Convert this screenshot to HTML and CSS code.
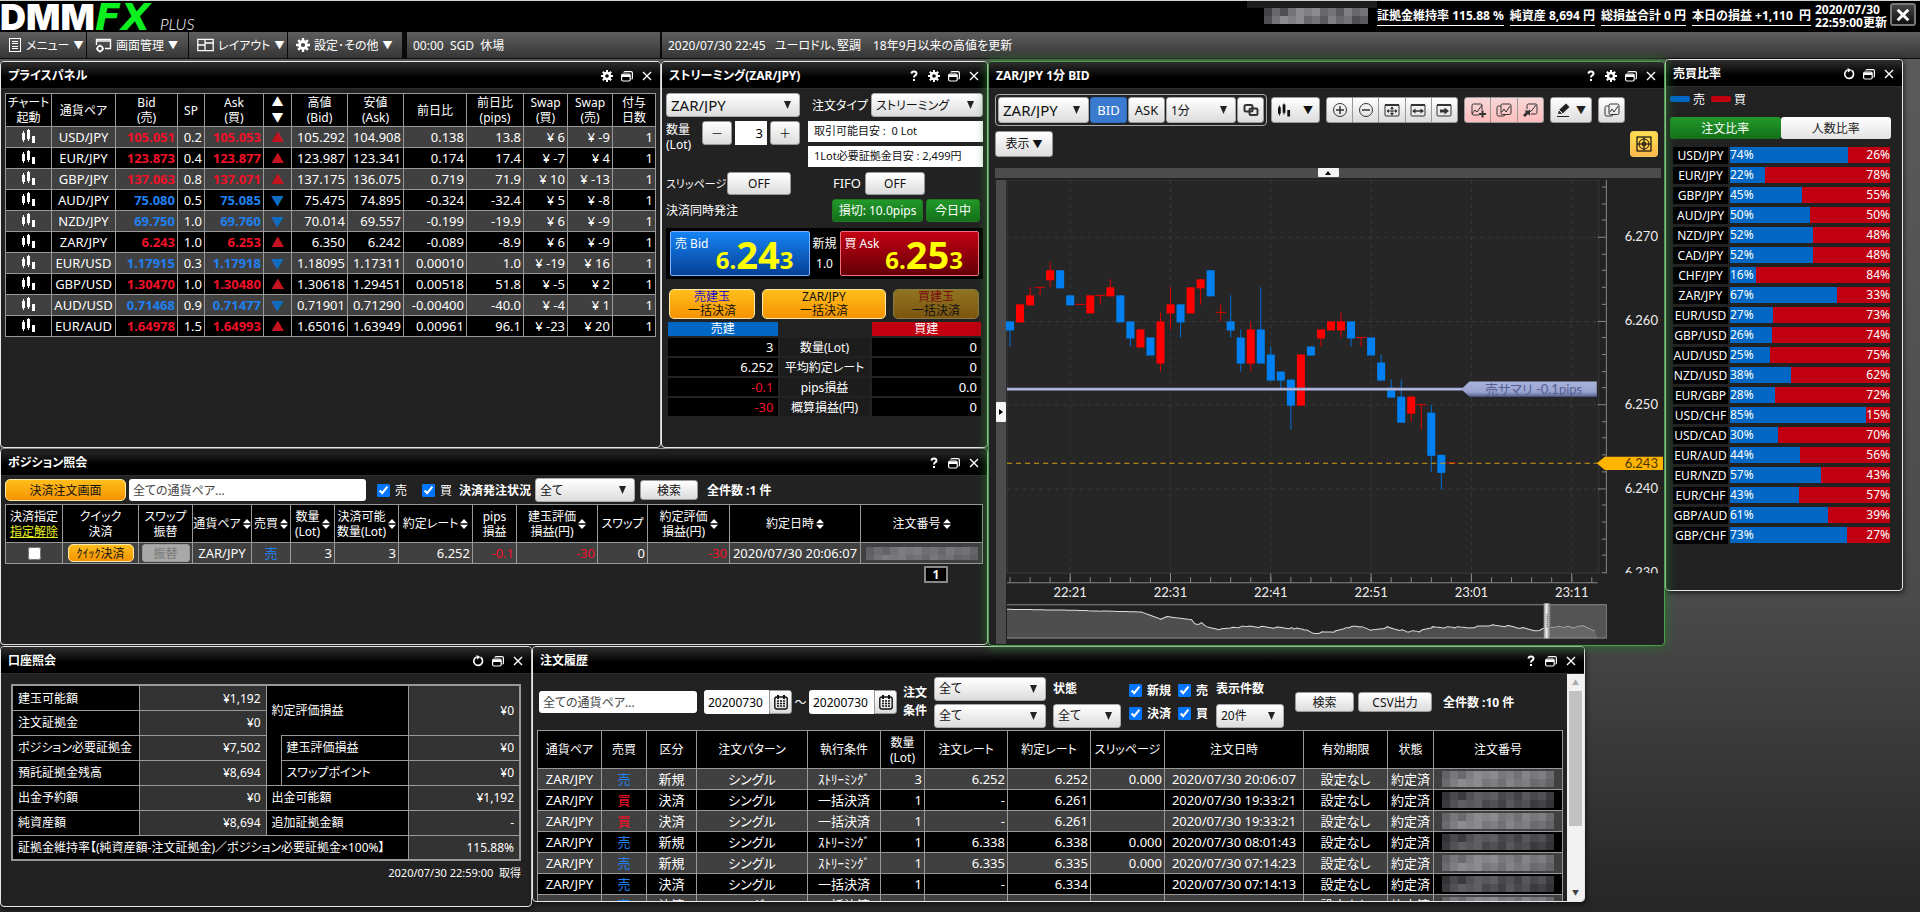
FILE: index.html
```html
<!DOCTYPE html>
<html lang="ja">
<head>
    <meta charset="UTF-8">
    <meta name="viewport" content="width=device-width, initial-scale=1.0">
    <title>DMM FX PLUS</title>
    <link rel="stylesheet" href="styles.css">
</head>
<body>
    <!-- Icon set -->
    <svg class="icon-defs" width="0" height="0" aria-hidden="true">
        <symbol id="i-help" viewBox="0 0 12 12"><path d="M3.5 3.6Q3.6 1.4 6 1.4T8.5 3.5Q8.5 4.8 7.2 5.4Q6 6 6 7.6" fill="none" stroke="currentColor" stroke-width="2"/><rect x="5" y="9" width="2" height="2" fill="currentColor"/></symbol>
        <symbol id="i-gear" viewBox="0 0 12 12"><circle cx="6" cy="6" r="3" fill="none" stroke="currentColor" stroke-width="2.4"/><path d="M6 0v3M6 9v3M0 6h3M9 6h3M1.8 1.8l2 2M8.2 8.2l2 2M1.8 10.2l2-2M8.2 3.8l2-2" stroke="currentColor" stroke-width="2"/></symbol>
        <symbol id="i-window" viewBox="0 0 12 12"><rect x=".6" y="4" width="8.6" height="7" rx="1.5" fill="none" stroke="currentColor" stroke-width="1.2"/><path d="M1 4.5h8v2.6H1z" fill="currentColor"/><path d="M3 2.6Q3 1.6 4 1.6h6q1.4 0 1.4 1.4v5q0 1-1 1" fill="none" stroke="currentColor" stroke-width="1.2"/></symbol>
        <symbol id="i-close" viewBox="0 0 12 12"><path d="M2 2l8 8M10 2l-8 8" stroke="currentColor" stroke-width="1.4"/></symbol>
        <symbol id="i-close-bold" viewBox="0 0 12 12"><path d="M2 2l8 8M10 2l-8 8" stroke="currentColor" stroke-width="2.2"/></symbol>
        <symbol id="i-reload" viewBox="0 0 12 12"><path d="M8.5 2.3A4.4 4.4 0 1 1 4.6 1.9" fill="none" stroke="currentColor" stroke-width="1.6"/><path d="M4.5 0l4 2-3.6 2.4z" fill="currentColor"/></symbol>
        <symbol id="i-sort" viewBox="0 0 8 10"><path d="M4 0l4 4.2H0zM4 10l4-4.2H0z" fill="currentColor"/></symbol>
        <symbol id="i-candle" viewBox="0 0 14 15"><path d="M0 4h3v7H0zM5 1h3v9H5zM10 7h3v7h-3z" fill="currentColor"/><path d="M1.5 2v11M6.500 0v12" stroke="currentColor"/></symbol>
        <symbol id="i-calendar" viewBox="0 0 14 15"><rect x=".8" y="2" width="12.4" height="12" rx="2" fill="none" stroke="currentColor" stroke-width="1.4"/><path d="M4 0v4M10 0v4" stroke="currentColor" stroke-width="2"/><path d="M3 6h8M3 8.5h8M3 11h8" stroke="currentColor" stroke-width="1.6" stroke-dasharray="2 1"/></symbol>
        <symbol id="i-list" viewBox="0 0 14 14"><rect x="1.5" y=".5" width="11" height="13" fill="none" stroke="currentColor"/><path d="M4 3.5h6M4 5.5h6M4 8.5h6M4 10.5h6" stroke="currentColor"/></symbol>
        <symbol id="i-screen" viewBox="0 0 17 15"><path d="M1.5 7V1.5h14v9H10" fill="none" stroke="currentColor" stroke-width="1.4"/><path d="M1.5 3h14" stroke="currentColor" stroke-width="1.4"/><circle cx="5" cy="10.6" r="2.6" fill="none" stroke="currentColor" stroke-width="1.6"/><path d="M5 6.8v1.6M5 12.8v1.6M1.2 10.6h1.6M7.2 10.6h1.6" stroke="currentColor" stroke-width="1.6"/></symbol>
        <symbol id="i-layout" viewBox="0 0 17 14"><path d="M.8 1.3h15.4v11.4H.8zM8 1.3v11.4M.8 7H8M8 5h8" fill="none" stroke="currentColor" stroke-width="1.3"/></symbol>
        <symbol id="i-link" viewBox="0 0 16 14"><rect x="1.5" y="2" width="8" height="6.5" rx="1.5" fill="none" stroke="currentColor" stroke-width="2"/><rect x="6.5" y="5.5" width="8" height="6.5" rx="1.5" fill="none" stroke="currentColor" stroke-width="2"/></symbol>
        <symbol id="i-plus" viewBox="0 0 16 16"><circle cx="8" cy="8" r="6.5" fill="none" stroke="currentColor"/><path d="M4 8h8M8 4v8" stroke="currentColor" stroke-width="1.5"/></symbol>
        <symbol id="i-minus" viewBox="0 0 16 16"><circle cx="8" cy="8" r="6.5" fill="none" stroke="currentColor"/><path d="M4 8h8" stroke="currentColor" stroke-width="1.5"/></symbol>
        <symbol id="i-move" viewBox="0 0 16 16"><rect x="1" y="2.5" width="14" height="11.5" rx="1" fill="none" stroke="currentColor"/><path d="M1 2h14v2H1z" fill="currentColor"/><path d="M3 9h10M8 5v8" stroke="currentColor"/><path d="M2.5 9l2.5-2v4zM13.5 9L11 7v4zM8 4.5L6 7h4zM8 13.5L6 11h4z" fill="currentColor"/></symbol>
        <symbol id="i-wide" viewBox="0 0 16 16"><rect x="1" y="2.5" width="14" height="11.5" rx="1" fill="none" stroke="currentColor"/><path d="M1 2h14v2H1z" fill="currentColor"/><path d="M4 9h8" stroke="currentColor" stroke-width="1.4"/><path d="M2 9l3.5-2.5v5zM14 9l-3.5-2.5v5z" fill="currentColor"/></symbol>
        <symbol id="i-latest" viewBox="0 0 16 16"><rect x="1" y="2.5" width="14" height="11.5" rx="1" fill="none" stroke="currentColor"/><path d="M1 2h14v2H1z" fill="currentColor"/><path d="M4 7.500h4.500V5.500L13 9l-4.500 3.500v-2H4z" fill="currentColor"/></symbol>
        <symbol id="i-tech-add" viewBox="0 0 16 16"><path d="M9 13H3.5Q2 13 2 11.5V3.5Q2 2 3.5 2h7Q12 2 12 3.5V8" fill="none" stroke="currentColor"/><path d="M2 12l3-4 2 2 5-7" fill="none" stroke="currentColor"/><path d="M12.5 8.500v7M9 12h7" stroke="currentColor" stroke-width="2"/></symbol>
        <symbol id="i-tech-copy" viewBox="0 0 16 16"><path d="M5 4H2.5Q1 4 1 5.5v7Q1 14 2.5 14h5Q9 14 9 12.5" fill="none" stroke="currentColor"/><rect x="5" y="2" width="10" height="10.5" rx="1.5" fill="none" stroke="currentColor"/><path d="M6 10l2-3 2 3 4-6" fill="none" stroke="currentColor"/></symbol>
        <symbol id="i-tech-out" viewBox="0 0 16 16"><path d="M5 7V3.5Q5 2 6.5 2h7Q15 2 15 3.5v7Q15 12 13.5 12H9" fill="none" stroke="currentColor"/><path d="M7 8l2 1.500 5-6.500" fill="none" stroke="currentColor"/><path d="M2.500 8.500H8V14l-2-2-3 3-2-2 3-3z" fill="currentColor"/></symbol>
        <symbol id="i-pen" viewBox="0 0 16 16"><path d="M2 12l1-4 7-6.5 3.5 3.5-7 6.5z" fill="currentColor"/><path d="M3 8l3.5 3.5" stroke="#fff"/><path d="M1 14.5h12" stroke="currentColor"/></symbol>
        <symbol id="i-target" viewBox="0 0 16 16"><rect x="1" y="1" width="14" height="14" fill="none" stroke="currentColor" stroke-width="1.2"/><circle cx="8" cy="8" r="5" fill="none" stroke="currentColor"/><circle cx="8" cy="8" r="2" fill="none" stroke="currentColor"/><path d="M1 8h14M8 1v14" stroke="currentColor"/></symbol>
    </svg>

    <header class="top-bar">
        <div class="logo"><span class="logo-dmm">DMM</span><span class="logo-fx">FX</span><span class="logo-plus">PLUS</span></div>
        <div class="account-name"><svg class="mosaic" id="name-mosaic" width="104" height="16"></svg></div>
        <div class="summary">
            <span>証拠金維持率 115.88 %</span>
            <span>純資産 8,694 円</span>
            <span>総損益合計 0 円</span>
            <span>本日の損益 +1,110 &nbsp;円</span>
        </div>
        <div class="updated">2020/07/30<br>22:59:00更新</div>
        <button class="app-close" aria-label="閉じる"><svg width="16" height="16"><use href="#i-close-bold"/></svg></button>
    </header>

    <nav class="menu-bar">
        <button class="menu-item m-menu"><svg width="14" height="14"><use href="#i-list"/></svg>メニュー<i>▼</i></button>
        <button class="menu-item m-screen"><svg width="17" height="15"><use href="#i-screen"/></svg>画面管理<i>▼</i></button>
        <button class="menu-item m-layout"><svg width="17" height="14"><use href="#i-layout"/></svg>レイアウト<i>▼</i></button>
        <button class="menu-item m-setting"><svg width="14" height="14"><use href="#i-gear"/></svg>設定･その他<i>▼</i></button>
        <div class="ticker ticker-first">00:00 &nbsp;SGD &nbsp;休場</div>
        <div class="ticker ticker-news">2020/07/30 22:45 &nbsp; ユーロドル、堅調　18年9月以来の高値を更新</div>
    </nav>

    <main class="desktop">
        <div class="upper">
            <div class="left-side">
                <div class="left-top">
                    <section class="window price-panel">
                        <div class="title-bar">
                            <h2>プライスパネル</h2>
                            <button aria-label="設定"><svg><use href="#i-gear"/></svg></button>
                            <button aria-label="最大化"><svg><use href="#i-window"/></svg></button>
                            <button aria-label="閉じる"><svg><use href="#i-close"/></svg></button>
                        </div>
                        <table class="grid-table price-table">
                            <thead>
                                <tr>
                                    <th>チャート<br>起動</th>
                                    <th>通貨ペア</th>
                                    <th>Bid<br>(売)</th>
                                    <th>SP</th>
                                    <th>Ask<br>(買)</th>
                                    <th>▲<br>▼</th>
                                    <th>高値<br>(Bid)</th>
                                    <th>安値<br>(Ask)</th>
                                    <th>前日比</th>
                                    <th>前日比<br>(pips)</th>
                                    <th>Swap<br>(買)</th>
                                    <th>Swap<br>(売)</th>
                                    <th>付与<br>日数</th>
                                </tr>
                            </thead>
                            <tbody id="price-body"></tbody>
                        </table>
                    </section>

                    <section class="window streaming">
                        <div class="title-bar">
                            <h2>ストリーミング(ZAR/JPY)</h2>
                            <button aria-label="ヘルプ"><svg><use href="#i-help"/></svg></button>
                            <button aria-label="設定"><svg><use href="#i-gear"/></svg></button>
                            <button aria-label="最大化"><svg><use href="#i-window"/></svg></button>
                            <button aria-label="閉じる"><svg><use href="#i-close"/></svg></button>
                        </div>
                        <div class="order-form">
                            <div class="form-row">
                                <select class="select big pair-select" aria-label="通貨ペア"><option>ZAR/JPY</option></select>
                                <label class="type-label" for="order-type">注文タイプ</label>
                                <select class="select type-select" id="order-type"><option>ストリーミング</option></select>
                            </div>
                            <div class="form-row lot-row">
                                <label class="lot-label" for="lot">数量<br>(Lot)</label>
                                <button class="btn step">－</button>
                                <input class="lot-input" id="lot" type="text" value="3">
                                <button class="btn step">＋</button>
                                <div class="info-boxes">
                                    <div>取引可能目安 : &nbsp;0 Lot</div>
                                    <div>1Lot必要証拠金目安 : 2,499円</div>
                                </div>
                            </div>
                            <div class="form-row slip-row">
                                <span class="slip-label">スリッページ</span>
                                <button class="btn slip-btn">OFF</button>
                                <span class="fifo-label">FIFO</span>
                                <button class="btn fifo-btn">OFF</button>
                            </div>
                            <div class="form-row settle-row">
                                <span>決済同時発注</span>
                                <button class="btn green loss-btn">損切: 10.0pips</button>
                                <button class="btn green day-btn">今日中</button>
                            </div>
                        </div>
                        <div class="rates">
                            <button class="rate bid"><span>売 Bid</span><b>6.<em>24</em>3</b></button>
                            <div class="spread">新規<br>1.0</div>
                            <button class="rate ask"><span>買 Ask</span><b>6.<em>25</em>3</b></button>
                        </div>
                        <div class="close-all">
                            <button class="btn gold"><span class="sell">売建玉</span><br>一括決済</button>
                            <button class="btn gold mid">ZAR/JPY<br>一括決済</button>
                            <button class="btn gold" disabled><span class="buy">買建玉</span><br>一括決済</button>
                        </div>
                        <table class="summary-table">
                            <tr><th class="sell-head">売建</th><td class="blank"></td><th class="buy-head">買建</th></tr>
                            <tr><td>3</td><th>数量(Lot)</th><td>0</td></tr>
                            <tr><td>6.252</td><th>平均約定レート</th><td>0</td></tr>
                            <tr><td class="minus">-0.1</td><th>pips損益</th><td>0.0</td></tr>
                            <tr><td class="minus">-30</td><th>概算損益(円)</th><td>0</td></tr>
                        </table>
                    </section>
                </div>

                <section class="window position">
                    <div class="title-bar">
                        <h2>ポジション照会</h2>
                        <button aria-label="ヘルプ"><svg><use href="#i-help"/></svg></button>
                        <button aria-label="最大化"><svg><use href="#i-window"/></svg></button>
                        <button aria-label="閉じる"><svg><use href="#i-close"/></svg></button>
                    </div>
                    <div class="filter-row">
                        <button class="btn gold settle-btn">決済注文画面</button>
                        <input class="text-input pos-pair" type="text" placeholder="全ての通貨ペア..." aria-label="通貨ペア">
                        <label class="check"><input type="checkbox" checked>売</label>
                        <label class="check"><input type="checkbox" checked>買</label>
                        <label class="strong" for="pos-status">決済発注状況</label>
                        <select class="select pos-status" id="pos-status"><option>全て</option></select>
                        <button class="btn pos-search">検索</button>
                        <span class="strong">全件数 :1 件</span>
                    </div>
                    <table class="grid-table position-table">
                        <thead>
                            <tr>
                                <th>決済指定<br><a href="#">指定解除</a></th>
                                <th>クイック<br>決済</th>
                                <th>スワップ<br>振替</th>
                                <th><span class="sortable">通貨ペア<svg><use href="#i-sort"/></svg></span></th>
                                <th><span class="sortable">売買<svg><use href="#i-sort"/></svg></span></th>
                                <th><span class="sortable"><span>数量<br>(Lot)</span><svg><use href="#i-sort"/></svg></span></th>
                                <th><span class="sortable"><span>決済可能<br>数量(Lot)</span><svg><use href="#i-sort"/></svg></span></th>
                                <th><span class="sortable">約定レート<svg><use href="#i-sort"/></svg></span></th>
                                <th>pips<br>損益</th>
                                <th><span class="sortable"><span>建玉評価<br>損益(円)</span><svg><use href="#i-sort"/></svg></span></th>
                                <th>スワップ</th>
                                <th><span class="sortable"><span>約定評価<br>損益(円)</span><svg><use href="#i-sort"/></svg></span></th>
                                <th><span class="sortable">約定日時<svg><use href="#i-sort"/></svg></span></th>
                                <th><span class="sortable">注文番号<svg><use href="#i-sort"/></svg></span></th>
                            </tr>
                        </thead>
                        <tbody>
                            <tr>
                                <td class="center"><input type="checkbox" aria-label="決済指定"></td>
                                <td class="center"><button class="btn gold quick-btn">ｸｲｯｸ決済</button></td>
                                <td class="center"><button class="btn swap-btn" disabled>振替</button></td>
                                <td class="center">ZAR/JPY</td>
                                <td class="center down">売</td>
                                <td>3</td>
                                <td>3</td>
                                <td>6.252</td>
                                <td class="minus">-0.1</td>
                                <td class="minus">-30</td>
                                <td>0</td>
                                <td class="minus">-30</td>
                                <td class="center">2020/07/30 20:06:07</td>
                                <td class="center"><svg class="mosaic" id="pos-mosaic" width="112" height="13"></svg></td>
                            </tr>
                        </tbody>
                    </table>
                    <div class="pager"><button>1</button></div>
                </section>
            </div>

            <section class="window chart active">
                <div class="title-bar">
                    <h2>ZAR/JPY 1分 BID</h2>
                    <button aria-label="ヘルプ"><svg><use href="#i-help"/></svg></button>
                    <button aria-label="設定"><svg><use href="#i-gear"/></svg></button>
                    <button aria-label="最大化"><svg><use href="#i-window"/></svg></button>
                    <button aria-label="閉じる"><svg><use href="#i-close"/></svg></button>
                </div>
                <div class="chart-tools">
                    <div class="tool-box">
                        <select class="select big chart-pair" aria-label="通貨ペア"><option>ZAR/JPY</option></select>
                        <button class="btn side selected">BID</button>
                        <button class="btn side">ASK</button>
                        <select class="select chart-span" aria-label="足種"><option>1分</option></select>
                        <button class="btn icon-btn" aria-label="連動"><svg width="16" height="14"><use href="#i-link"/></svg></button>
                    </div>
                    <button class="btn candle-btn" aria-label="チャート種類"><svg width="14" height="15"><use href="#i-candle"/></svg><i>▼</i></button>
                    <div class="btn-group zoom">
                        <button class="btn icon-btn" aria-label="拡大"><svg><use href="#i-plus"/></svg></button>
                        <button class="btn icon-btn" aria-label="縮小"><svg><use href="#i-minus"/></svg></button>
                        <button class="btn icon-btn" aria-label="全体表示"><svg><use href="#i-move"/></svg></button>
                        <button class="btn icon-btn" aria-label="横幅"><svg><use href="#i-wide"/></svg></button>
                        <button class="btn icon-btn" aria-label="最新"><svg><use href="#i-latest"/></svg></button>
                    </div>
                    <div class="btn-group pink">
                        <button class="btn icon-btn" aria-label="テクニカル追加"><svg><use href="#i-tech-add"/></svg></button>
                        <button class="btn icon-btn" aria-label="テクニカルコピー"><svg><use href="#i-tech-copy"/></svg></button>
                        <button class="btn icon-btn" aria-label="テクニカル呼出"><svg><use href="#i-tech-out"/></svg></button>
                    </div>
                    <button class="btn pen-btn" aria-label="描画"><svg><use href="#i-pen"/></svg><i>▼</i></button>
                    <button class="btn icon-btn copy-btn" aria-label="複製"><svg><use href="#i-tech-copy"/></svg></button>
                </div>
                <div class="chart-tools second">
                    <button class="btn view-btn">表示<i>▼</i></button>
                    <button class="btn target-btn" aria-label="ターゲット"><svg><use href="#i-target"/></svg></button>
                </div>
                <div class="fold-top"><button aria-label="折りたたむ"><svg viewBox="0 0 6 4"><path d="M3 0l3 4H0z"/></svg></button></div>
                <div class="chart-area">
                    <div class="fold-left"><button aria-label="開く"><svg viewBox="0 0 4 6"><path d="M0 0l4 3-4 3z"/></svg></button></div>
                    <svg id="chart" viewBox="0 0 655 463"></svg>
                </div>
            </section>

            <section class="window ratio">
                <div class="title-bar">
                    <h2>売買比率</h2>
                    <button aria-label="更新"><svg><use href="#i-reload"/></svg></button>
                    <button aria-label="最大化"><svg><use href="#i-window"/></svg></button>
                    <button aria-label="閉じる"><svg><use href="#i-close"/></svg></button>
                </div>
                <div class="legend"><span class="sell">売</span><span class="buy">買</span></div>
                <div class="tabs">
                    <button class="on">注文比率</button>
                    <button>人数比率</button>
                </div>
                <div id="ratio-list"></div>
            </section>
        </div>

        <div class="lower">
            <section class="window account">
                <div class="title-bar">
                    <h2>口座照会</h2>
                    <button aria-label="更新"><svg><use href="#i-reload"/></svg></button>
                    <button aria-label="最大化"><svg><use href="#i-window"/></svg></button>
                    <button aria-label="閉じる"><svg><use href="#i-close"/></svg></button>
                </div>
                <table class="account-table">
                    <colgroup><col class="c1"><col class="c2"><col class="c3"><col class="c4"><col class="c5"></colgroup>
                    <tr><th>建玉可能額</th><td>¥1,192</td><th colspan="2" rowspan="2">約定評価損益</th><td rowspan="2">¥0</td></tr>
                    <tr><th>注文証拠金</th><td>¥0</td></tr>
                    <tr><th>ポジション必要証拠金</th><td>¥7,502</td><th rowspan="2" class="no-top"></th><th>建玉評価損益</th><td>¥0</td></tr>
                    <tr><th>預託証拠金残高</th><td>¥8,694</td><th>スワップポイント</th><td>¥0</td></tr>
                    <tr><th>出金予約額</th><td>¥0</td><th colspan="2">出金可能額</th><td>¥1,192</td></tr>
                    <tr><th>純資産額</th><td>¥8,694</td><th colspan="2">追加証拠金額</th><td>-</td></tr>
                    <tr><th colspan="4">証拠金維持率【(純資産額-注文証拠金)／ポジション必要証拠金×100%】</th><td>115.88%</td></tr>
                </table>
                <div class="acquired">2020/07/30 22:59:00 &nbsp;取得</div>
            </section>

            <section class="window history">
                <div class="title-bar">
                    <h2>注文履歴</h2>
                    <button aria-label="ヘルプ"><svg><use href="#i-help"/></svg></button>
                    <button aria-label="最大化"><svg><use href="#i-window"/></svg></button>
                    <button aria-label="閉じる"><svg><use href="#i-close"/></svg></button>
                </div>
                <div class="history-body">
                    <div class="history-main">
                        <div class="history-filter">
                            <input class="text-input his-pair" type="text" placeholder="全ての通貨ペア..." aria-label="通貨ペア">
                            <div class="date-range">
                                <span class="date"><input type="text" value="20200730" aria-label="開始日"><button class="btn" aria-label="カレンダー"><svg><use href="#i-calendar"/></svg></button></span>
                                <span class="tilde">～</span>
                                <span class="date"><input type="text" value="20200730" aria-label="終了日"><button class="btn" aria-label="カレンダー"><svg><use href="#i-calendar"/></svg></button></span>
                            </div>
                            <div class="strong two-line">注文<br>条件</div>
                            <div class="stack cond">
                                <select class="select" aria-label="注文条件1"><option>全て</option></select>
                                <select class="select" aria-label="注文条件2"><option>全て</option></select>
                            </div>
                            <div class="stack state">
                                <label class="strong" for="his-state">状態</label>
                                <select class="select" id="his-state"><option>全て</option></select>
                            </div>
                            <div class="checks">
                                <label class="check strong"><input type="checkbox" checked>新規</label>
                                <label class="check strong"><input type="checkbox" checked>売</label>
                                <label class="check strong"><input type="checkbox" checked>決済</label>
                                <label class="check strong"><input type="checkbox" checked>買</label>
                            </div>
                            <div class="stack count">
                                <label class="strong" for="his-count">表示件数</label>
                                <select class="select" id="his-count"><option>20件</option></select>
                            </div>
                            <div class="his-buttons">
                                <button class="btn his-search">検索</button>
                                <button class="btn his-csv">CSV出力</button>
                                <span class="strong">全件数 :10 件</span>
                            </div>
                        </div>
                        <table class="grid-table history-table">
                            <thead>
                                <tr>
                                    <th>通貨ペア</th>
                                    <th>売買</th>
                                    <th>区分</th>
                                    <th>注文パターン</th>
                                    <th>執行条件</th>
                                    <th>数量<br>(Lot)</th>
                                    <th>注文レート</th>
                                    <th>約定レート</th>
                                    <th>スリッページ</th>
                                    <th>注文日時</th>
                                    <th>有効期限</th>
                                    <th>状態</th>
                                    <th>注文番号</th>
                                </tr>
                            </thead>
                            <tbody id="history-body"></tbody>
                        </table>
                    </div>
                    <div class="scrollbar"><span>▲</span><div class="thumb"></div><span class="dark">▼</span></div>
                </div>
            </section>
        </div>
    </main>

    <script>
        const prices = [
            ['USD/JPY', '105.051', '0.2', '105.053', 1, '105.292', '104.908', '0.138', '13.8', '6', '-9'],
            ['EUR/JPY', '123.873', '0.4', '123.877', 1, '123.987', '123.341', '0.174', '17.4', '-7', '4'],
            ['GBP/JPY', '137.063', '0.8', '137.071', 1, '137.175', '136.075', '0.719', '71.9', '10', '-13'],
            ['AUD/JPY', '75.080', '0.5', '75.085', 0, '75.475', '74.895', '-0.324', '-32.4', '5', '-8'],
            ['NZD/JPY', '69.750', '1.0', '69.760', 0, '70.014', '69.557', '-0.199', '-19.9', '6', '-9'],
            ['ZAR/JPY', '6.243', '1.0', '6.253', 1, '6.350', '6.242', '-0.089', '-8.9', '6', '-9'],
            ['EUR/USD', '1.17915', '0.3', '1.17918', 0, '1.18095', '1.17311', '0.00010', '1.0', '-19', '16'],
            ['GBP/USD', '1.30470', '1.0', '1.30480', 1, '1.30618', '1.29451', '0.00518', '51.8', '-5', '2'],
            ['AUD/USD', '0.71468', '0.9', '0.71477', 0, '0.71901', '0.71290', '-0.00400', '-40.0', '-4', '1'],
            ['EUR/AUD', '1.64978', '1.5', '1.64993', 1, '1.65016', '1.63949', '0.00961', '96.1', '-23', '20']
        ];

        const ratios = [
            ['USD/JPY', 74], ['EUR/JPY', 22], ['GBP/JPY', 45], ['AUD/JPY', 50], ['NZD/JPY', 52],
            ['CAD/JPY', 52], ['CHF/JPY', 16], ['ZAR/JPY', 67], ['EUR/USD', 27], ['GBP/USD', 26],
            ['AUD/USD', 25], ['NZD/USD', 38], ['EUR/GBP', 28], ['USD/CHF', 85], ['USD/CAD', 30],
            ['EUR/AUD', 44], ['EUR/NZD', 57], ['EUR/CHF', 43], ['GBP/AUD', 61], ['GBP/CHF', 73]
        ];

        const orders = [
            ['売', '新規', 'ｽﾄﾘｰﾐﾝｸﾞ', '3', '6.252', '6.252', '0.000', '2020/07/30 20:06:07'],
            ['買', '決済', '一括決済', '1', '-', '6.261', '', '2020/07/30 19:33:21'],
            ['買', '決済', '一括決済', '1', '-', '6.261', '', '2020/07/30 19:33:21'],
            ['売', '新規', 'ｽﾄﾘｰﾐﾝｸﾞ', '1', '6.338', '6.338', '0.000', '2020/07/30 08:01:43'],
            ['売', '新規', 'ｽﾄﾘｰﾐﾝｸﾞ', '1', '6.335', '6.335', '0.000', '2020/07/30 07:14:23'],
            ['売', '決済', '一括決済', '1', '-', '6.334', '', '2020/07/30 07:14:13'],
            ['売', '決済', '一括決済', '1', '-', '6.334', '', '2020/07/30 07:14:13']
        ];

        // [up, body top, body bottom, high, low] in 1/1000 above 6
        const candles = [
            [0,260,259,260,257],[1,262,260,262,260],[1,263,262,264,262],[1,264,264,264,263],[1,266,265,267,264],
            [0,266,264,266,264],[0,263,262,263,262],[1,262,262,262,262],[1,263,261,263,261],[1,263,263,263,262],
            [1,264,263,265,263],[0,263,260,263,260],[0,260,258,260,257],[1,259,257,259,257],[0,258,256,258,256],
            [1,260,255,261,254],[1,262,261,264,259],[0,262,260,262,258],[1,264,261,264,261],[1,265,264,265,262],
            [0,266,263,266,263],[1,261,261,262,260],[0,260,259,263,258],[0,258,255,259,254],[1,259,255,260,254],
            [0,259,255,264,255],[0,256,253,257,253],[0,254,253,254,252],[0,253,250,253,247],[1,256,250,256,250],
            [0,257,256,257,256],[1,259,258,259,257],[1,260,259,260,259],[1,260,259,261,258],[0,260,258,260,257],
            [1,258,258,258,257],[0,258,256,258,256],[0,255,253,256,253],[0,252,251,253,251],[0,251,248,253,248],
            [1,251,249,251,248],[1,250,250,250,247],[0,249,244,250,242],[0,244,242,244,240],[1,243,243,243,243]
        ];

        const overview = [
            [1,428],[70,429],[96,430],[135,431],[154,438],[161,435],[185,438],[189,443],[195,442],[200,446],
            [215,448],[226,446],[243,445],[287,447],[297,448],[306,452],[328,450],[339,446],[352,445],[365,449],
            [380,446],[399,450],[412,450],[425,446],[447,446],[464,446],[482,444],[503,445],[529,449],[540,447],
            [551,445],[564,446],[575,445],[584,448],[590,450]
        ];

        document.getElementById('price-body').innerHTML = prices.map(p => {
            const dir = p[4] ? 'up' : 'down';
            return `<tr>
                <td class="center"><svg class="candle-icon" width="14" height="15"><use href="#i-candle"/></svg></td>
                <td class="center">${p[0]}</td>
                <td class="rate-cell ${dir}">${p[1]}</td>
                <td>${p[2]}</td>
                <td class="rate-cell ${dir}">${p[3]}</td>
                <td class="center arrow ${dir}">${p[4] ? '▲' : '▼'}</td>
                <td>${p[5]}</td><td>${p[6]}</td><td>${p[7]}</td><td>${p[8]}</td>
                <td>¥ ${p[9]}</td><td>¥ ${p[10]}</td><td>1</td>
            </tr>`;
        }).join('');

        document.getElementById('ratio-list').innerHTML = ratios.map(([pair, sell]) => `
            <div class="ratio-row">
                <span class="pair">${pair}</span>
                <div class="bar"><div class="sell" style="width: ${sell}%">${sell}%</div><span>${100 - sell}%</span></div>
            </div>`
        ).join('');

        document.getElementById('history-body').innerHTML = orders.map(o => `<tr>
                <td class="center">ZAR/JPY</td>
                <td class="center ${o[0] === '売' ? 'down' : 'up'}">${o[0]}</td>
                <td class="center">${o[1]}</td>
                <td class="center">シングル</td>
                <td class="center">${o[2]}</td>
                <td>${o[3]}</td><td>${o[4]}</td><td>${o[5]}</td><td>${o[6]}</td>
                <td class="center">${o[7]}</td>
                <td class="center">設定なし</td>
                <td class="center">約定済</td>
                <td class="center"><svg class="mosaic number" width="112" height="16"></svg></td>
            </tr>`
        ).join('');

        // Masked names and numbers are drawn as 8px blocks
        function drawMosaic(svg, base, range) {
            const w = svg.getAttribute('width');
            const h = svg.getAttribute('height');
            const mix = [3, 6, 4, 7, 9, 8, 9, 6, 7, 5, 8, 6, 7, 4, 5];
            let html = '';
            for (let y = 0; y < h; y += 8) {
                for (let x = 0; x < w; x += 8) {
                    const v = base + Math.round(range * mix[(x / 8 + y / 4) % mix.length] / 9);
                    html += `<rect x="${x}" y="${y}" width="8" height="8" fill="rgb(${v},${v},${v + 4})"/>`;
                }
            }
            svg.innerHTML = html;
        }
        drawMosaic(document.getElementById('name-mosaic'), 30, 110);
        drawMosaic(document.getElementById('pos-mosaic'), 80, 45);
        document.querySelectorAll('.mosaic.number').forEach((svg, i) => {
            drawMosaic(svg, i % 2 ? 30 : 80, i % 2 ? 65 : 60);
        });

        function drawChart() {
            const priceY = p => Math.round(57 + (270 - p) * 8.35);
            let s = '<rect x="1" y="0" width="590" height="392" class="plot"/>';
            for (let i = 0; i < 6; i++) {
                const x = 64 + i * 100;
                s += `<line x1="${x}" x2="${x}" y1="0" y2="392" class="grid"/>`;
                s += `<text x="${x}" y="416" class="time">${['22:21', '22:31', '22:41', '22:51', '23:01', '23:11'][i]}</text>`;
            }
            for (let p = 270; p >= 240; p -= 10) {
                s += `<line x1="1" x2="590" y1="${priceY(p)}" y2="${priceY(p)}" class="grid"/>`;
                s += `<text x="650" y="${priceY(p) + 4}" class="price">6.${p}</text>`;
            }
            s += '<svg x="600" y="380" width="55" height="12"><text x="50" y="16" class="price">6.230</text></svg>';
            // axes
            s += '<path d="M598.5 0V391.5H594M1 401.5H590" class="axis"/>';
            for (let x = 4; x < 590; x += 20) {
                s += `<line x1="${x}" x2="${x}" y1="396" y2="401" class="tick"/>`;
            }
            for (let x = 64; x < 590; x += 100) {
                s += `<line x1="${x}" x2="${x}" y1="392" y2="401" class="tick"/>`;
            }
            for (let p = 276; p > 230; p -= 2) {
                s += `<line x1="${p % 10 ? 594 : 590}" x2="598" y1="${priceY(p)}" y2="${priceY(p)}" class="tick"/>`;
            }
            candles.forEach(([up, top, bottom, high, low], i) => {
                const x = 4 + i * 10;
                const color = up ? 'red' : 'blue';
                if (high !== low) {
                    s += `<line x1="${x}" x2="${x}" y1="${priceY(high)}" y2="${priceY(low)}" class="wick ${color}"/>`;
                }
                if (top === bottom) {
                    s += `<line x1="${x - 5}" x2="${x + 5}" y1="${priceY(top)}" y2="${priceY(top)}" class="wick ${color}"/>`;
                } else {
                    s += `<rect x="${x - 4}" y="${priceY(top)}" width="8" height="${priceY(bottom) - priceY(top) + 1}" class="body ${color}"/>`;
                }
            });
            // position line and current rate
            s += '<rect x="1" y="207" width="456" height="3" class="pos-line"/><rect x="1" y="208" width="456" height="1" fill="#d6daf4"/>';
            s += '<path d="M454 208.5l8-7.5h127v15H462z" fill="url(#tag)"/><text x="526" y="213" class="pos-text">売サマリ -0.1pips</text>';
            s += '<line x1="1" x2="591" y1="282.5" y2="282.5" class="current"/>';
            s += '<path d="M589 282.5l8-6.5h58v13h-58z" fill="#ffb400"/><text x="650" y="287" class="price now">6.243</text>';
            // overview
            let line = '';
            for (let i = 1; i < overview.length; i++) {
                const [x0, y0] = overview[i - 1];
                const [x1, y1] = overview[i];
                for (let x = x0; x < x1; x += 3) {
                    const wave = x > 190 ? ((x * 7) % 5 - 2) / 3 : ((x * 7) % 3 - 1) / 3;
                    line += `${x},${(y0 + (y1 - y0) * (x - x0) / (x1 - x0) + wave).toFixed(1)} `;
                }
            }
            s += `<polygon points="1,457 ${line}590,457" fill="#4e4e4e"/><polyline points="${line}" class="over-line"/>`;
            s += '<rect x="540" y="423" width="58" height="34" fill="#777" fill-opacity=".6"/>';
            s += '<path d="M1 423.5H598.5V456.5H1" class="axis"/>';
            s += '<rect x="536" y="422" width="7" height="35" fill="url(#grip)"/><path d="M539.5 433v13" stroke="#333" stroke-dasharray="1 1"/>';
            s += '<defs><linearGradient id="tag" x2="0" y2="1"><stop offset="0" stop-color="#a9b4dc"/><stop offset=".7" stop-color="#98a2cf"/><stop offset="1" stop-color="#565f8c"/></linearGradient><linearGradient id="grip"><stop offset="0" stop-color="#888"/><stop offset=".4" stop-color="#eee"/><stop offset="1" stop-color="#666"/></linearGradient></defs>';
            document.getElementById('chart').innerHTML = s;
        }
        drawChart();
    </script>
</body>
</html>
```

FILE: styles.css
```css
:root {
    --line: #999;
    --panel: #222;
    --sell: #0068c4;
    --buy: #c00010;
    --button: linear-gradient(#fff, #dcdcdc);
}

* {
    box-sizing: border-box;
}

body {
    margin: 0;
    min-height: 100vh;
    background: linear-gradient(#5c5c5c, #4a4a4a 66%, #262626);
    color: #fff;
    font-family: "Noto Sans", "Noto Sans CJK JP", sans-serif;
    font-size: 12px;
    line-height: 15px;
    font-feature-settings: "palt";
    overflow-x: hidden;
}

button,
input,
select {
    font: inherit;
    font-feature-settings: inherit;
    margin: 0;
}

button {
    padding: 0;
    border: none;
    background: none;
    color: inherit;
    white-space: nowrap;
    cursor: pointer;
}

i {
    font-style: normal;
    font-size: 10px;
}

table {
    border-collapse: collapse;
    table-layout: fixed;
}

th {
    font-weight: normal;
}

.icon-defs {
    display: none;
}

.strong {
    font-weight: bold;
    white-space: nowrap;
}

/* Header */
.top-bar {
    display: flex;
    height: 32px;
    background: #000;
    border-top: 1px solid #cfd6d2;
}

.logo {
    display: flex;
    align-items: flex-end;
    height: 31px;
    line-height: 30px;
}

.logo-dmm {
    width: 95px;
    font-family: Inter, sans-serif;
    font-size: 36px;
    font-weight: 900;
}

.logo-fx {
    width: 65px;
    color: #0bf01e;
    font-family: "DejaVu Sans", sans-serif;
    font-size: 38px;
    font-weight: bold;
    font-style: italic;
}

.logo-plus {
    font-family: Lato, sans-serif;
    font-size: 16px;
    font-weight: 300;
    font-style: italic;
    line-height: 16px;
}

.account-name {
    margin-left: auto;
    padding: 7px 9px 0 17px;
    background: linear-gradient(#1c1c1c 7px, #000 7px);
}

.mosaic {
    display: block;
    margin: 0 auto;
}

.summary {
    display: flex;
    gap: 6px;
    padding: 6px 4px 0 0;
    font-weight: bold;
    white-space: nowrap;
}

.summary span {
    height: 19px;
    line-height: 18px;
    border-bottom: 1px solid #fff;
}

.updated {
    width: 75px;
    padding-top: 2px;
    font-weight: bold;
    line-height: 13px;
    white-space: nowrap;
}

.app-close {
    width: 26px;
    height: 23px;
    margin: 2px 4px 0 0;
    border: 2px solid #777;
    border-radius: 3px;
    background: linear-gradient(#444, #111);
}

.app-close svg {
    display: block;
    margin: auto;
}

/* Menu */
.menu-bar {
    display: flex;
    height: 27px;
    background: #0a0a0a;
    border-bottom: 1px solid #111;
}

.menu-item,
.ticker {
    display: flex;
    align-items: center;
    background: linear-gradient(#5e5e5e, #363636);
    white-space: nowrap;
}

.menu-item {
    gap: 4px;
    padding-left: 8px;
    margin-right: 1px;
}

.m-menu {
    width: 86px;
}

.m-screen {
    width: 101px;
}

.m-layout {
    width: 98px;
}

.m-setting {
    width: 114px;
    margin-right: 5px;
}

.ticker {
    padding-left: 6px;
}

.ticker-first {
    width: 253px;
    margin-right: 2px;
}

.ticker-news {
    flex: 1;
}

/* Windows */
.upper {
    display: grid;
    grid-template-columns: 988fr 677fr 238fr 17fr;
    align-items: start;
}

.left-side {
    padding-top: 2px;
}

.left-top {
    display: grid;
    grid-template-columns: 661fr 327fr;
}

.lower {
    display: grid;
    grid-template-columns: 532fr 1053fr 335fr;
    align-items: start;
}

.window {
    min-width: 0;
    border: 1px solid #e8e8e8;
    border-radius: 4px;
    background: var(--panel);
    box-shadow: 1px 2px 5px rgba(0, 0, 0, 0.6);
    overflow: hidden;
}

.window.active {
    position: relative;
    border-color: #4aa04a;
    box-shadow: 0 0 12px #2c7a2c;
    margin-top: 2px;
}

.title-bar {
    display: flex;
    align-items: center;
    gap: 8px;
    height: 27px;
    padding: 0 7px;
    background: linear-gradient(#2e2e2e, #000 60%);
    border-bottom: 1px solid #2c2c2c;
}

.title-bar h2 {
    flex: 1;
    margin: 0;
    font-size: 12px;
    white-space: nowrap;
}

.title-bar button {
    padding-top: 2px;
}

.title-bar svg {
    display: block;
    width: 12px;
    height: 12px;
}

.price-panel,
.streaming {
    min-height: 387px;
}

.position {
    min-height: 197px;
}

/* Tables */
.grid-table {
    font-size: 13px;
}

.grid-table th,
.grid-table td {
    padding: 0 2px;
    border: 1px solid var(--line);
    white-space: nowrap;
    overflow: hidden;
}

.grid-table th {
    padding: 0;
    background: #000;
    font-size: 12px;
    text-align: center;
}

.grid-table td {
    height: 21px;
    text-align: right;
}

.grid-table tbody tr {
    background: #000;
}

.grid-table tbody tr:nth-child(odd) {
    background: #404040;
}

.grid-table .center {
    padding: 0;
    text-align: center;
}

.grid-table .up,
.minus {
    color: #f01028;
}

.grid-table .down {
    color: #2080f0;
}

.rate-cell {
    font-weight: bold;
}

.price-table {
    width: calc(100% - 8px);
    margin: 4px;
}

.price-table th {
    height: 33px;
}

.price-table th:nth-child(1) { width: 46px; }
.price-table th:nth-child(2) { width: 64px; }
.price-table th:nth-child(3) { width: 62px; }
.price-table th:nth-child(4) { width: 27px; }
.price-table th:nth-child(5) { width: 59px; }
.price-table th:nth-child(6) { width: 28px; }
.price-table th:nth-child(7) { width: 56px; }
.price-table th:nth-child(8) { width: 56px; }
.price-table th:nth-child(9) { width: 63px; }
.price-table th:nth-child(10) { width: 57px; }
.price-table th:nth-child(11) { width: 44px; }
.price-table th:nth-child(12) { width: 45px; }

.candle-icon {
    display: block;
    margin: 0 auto 2px;
}

.price-table .arrow.up {
    color: #c41420;
}

.price-table .arrow.down {
    color: #0f6cc0;
}

/* Buttons and inputs */
.btn {
    border: 1px solid #999;
    border-radius: 3px;
    background: var(--button);
    color: #111;
}

.btn.green {
    border-color: #1d7a1d;
    background: linear-gradient(#22992a, #14701a);
    color: #fff;
}

.btn.gold {
    border: 1px solid #ffe9a8;
    border-radius: 5px;
    background: linear-gradient(#ffbe1c, #f59300);
}

.btn svg {
    display: block;
    width: 16px;
    height: 16px;
    margin: 0 auto;
}

.select {
    height: 24px;
    padding: 0 18px 0 4px;
    border: 1px solid #aaa;
    border-radius: 3px;
    appearance: none;
    color: #111;
    background: url("data:image/svg+xml,%3Csvg xmlns='http://www.w3.org/2000/svg' width='7' height='8'%3E%3Cpath d='M0 0h7L3.5 8z' fill='%23222'/%3E%3C/svg%3E") no-repeat right 8px center, var(--button);
}

.select.big {
    font-size: 15px;
}

.text-input {
    height: 22px;
    padding: 0 4px;
    border: none;
    border-radius: 3px;
    background: #fff;
}

.text-input::placeholder {
    color: #444;
}

input[type="checkbox"] {
    width: 13px;
    height: 13px;
    accent-color: #0075ff;
}

.check {
    display: flex;
    align-items: center;
    gap: 5px;
    white-space: nowrap;
}

/* Streaming order */
.order-form {
    padding: 4px 4px 0;
}

.form-row {
    display: flex;
    align-items: center;
    height: 24px;
    white-space: nowrap;
}

.pair-select {
    width: 134px;
}

.type-label {
    flex: 1;
    text-align: right;
    padding-right: 3px;
}

.type-select {
    width: 112px;
}

.form-row.lot-row {
    align-items: flex-start;
    height: 53px;
    padding-top: 4px;
}

.lot-label {
    width: 36px;
    padding-top: 1px;
}

.step {
    width: 30px;
    height: 24px;
}

.lot-input {
    width: 32px;
    height: 24px;
    margin: 0 3px;
    padding: 0 4px;
    border: none;
    font-size: 13px;
    text-align: right;
}

.info-boxes {
    display: grid;
    gap: 4px;
    flex: 1;
    padding-left: 8px;
    font-size: 11px;
}

.info-boxes div {
    height: 21px;
    padding-left: 6px;
    background: #fff;
    color: #111;
    line-height: 20px;
}

.slip-row {
    padding-top: 3px;
}

.slip-label {
    width: 61px;
    font-size: 11px;
}

.slip-btn {
    width: 64px;
    height: 23px;
}

.fifo-label {
    flex: 1;
    padding-right: 4px;
    text-align: right;
    font-size: 13px;
}

.fifo-btn {
    width: 60px;
    height: 23px;
    margin-right: 58px;
}

.form-row.settle-row {
    height: 32px;
    gap: 3px;
}

.loss-btn {
    width: 91px;
    height: 23px;
    margin-left: auto;
}

.day-btn {
    width: 54px;
    height: 23px;
    margin-right: 3px;
}

.rates {
    display: flex;
    height: 51px;
    margin: 2px 4px 10px;
    padding: 3px 4px;
    background: #000;
}

.rate {
    display: flex;
    flex: 1;
    justify-content: space-between;
    padding: 4px 15px 0 4px;
    border: 1px solid #7db4ff;
    border-radius: 2px;
    background: linear-gradient(#1684f4, #053f96);
}

.rate.ask {
    border-color: #f07080;
    background: linear-gradient(#c30013, #640008);
}

.rate b {
    color: #ff0;
    font-size: 24px;
    line-height: 36px;
}

.rate em {
    font-size: 38px;
    font-style: normal;
}

.spread {
    width: 30px;
    text-align: center;
    line-height: 20px;
    padding-top: 3px;
}

.close-all {
    display: flex;
    justify-content: space-between;
    gap: 7px;
    padding: 0 8px 3px 7px;
}

.close-all .btn {
    flex: 86;
    height: 30px;
    line-height: 14px;
}

.close-all .btn.mid {
    flex: 125;
}

.close-all .btn:disabled {
    border-color: #8a7a4a;
    background: linear-gradient(#8f7420, #7d5610);
}

.close-all .sell {
    color: #1a10c8;
}

.close-all .buy {
    color: #780c10;
}

.summary-table {
    width: calc(100% - 8px);
    margin: -2px 4px 0;
    border-collapse: separate;
    border-spacing: 2px;
    font-size: 13px;
}

.summary-table td {
    height: 18px;
    padding: 0 4px;
    background: #000;
    text-align: right;
}

.summary-table th {
    padding: 0;
    background: #1c1c1c;
    font-size: 12px;
}

.summary-table tr:first-child > * {
    height: 14px;
    line-height: 14px;
}

.summary-table .sell-head {
    background: var(--sell);
}

.summary-table .buy-head {
    background: var(--buy);
}

.summary-table .blank {
    width: 90px;
    background: none;
}

/* Positions */
.filter-row {
    display: flex;
    align-items: center;
    height: 28px;
    padding-left: 4px;
}

.settle-btn {
    width: 121px;
    height: 22px;
    margin-right: 3px;
}

.pos-pair {
    width: 237px;
    margin-right: 11px;
}

.filter-row .check {
    width: 45px;
}

.filter-row .check + .strong {
    width: 76px;
}

.filter-row .check + .check {
    width: 37px;
}

.pos-status {
    width: 100px;
    margin-right: 5px;
}

.pos-search {
    width: 58px;
    height: 20px;
    margin-right: 9px;
}

.position-table {
    width: calc(100% - 8px);
    margin-left: 4px;
}

.position-table th {
    height: 38px;
}

.position-table a {
    color: #e8f020;
}

.sortable {
    display: inline-flex;
    align-items: center;
    gap: 2px;
}

.sortable svg {
    width: 8px;
    height: 10px;
}

.position-table input {
    display: block;
    margin: 0 auto;
}

.position-table th:nth-child(1) { width: 57px; }
.position-table th:nth-child(2) { width: 76px; }
.position-table th:nth-child(3) { width: 54px; }
.position-table th:nth-child(4) { width: 59px; }
.position-table th:nth-child(5) { width: 39px; }
.position-table th:nth-child(6) { width: 44px; }
.position-table th:nth-child(7) { width: 64px; }
.position-table th:nth-child(8) { width: 74px; }
.position-table th:nth-child(9) { width: 44px; }
.position-table th:nth-child(10) { width: 81px; }
.position-table th:nth-child(11) { width: 50px; }
.position-table th:nth-child(12) { width: 82px; }
.position-table th:nth-child(13) { width: 131px; }

.quick-btn,
.swap-btn {
    display: block;
    width: 66px;
    height: 18px;
    margin: 0 auto;
    font-size: 12px;
    line-height: 15px;
}

.swap-btn {
    width: 48px;
    background: #a8a8a8;
    color: #777;
}

.pager {
    display: flex;
    justify-content: flex-end;
    padding: 2px 39px 0 0;
}

.pager button {
    width: 24px;
    height: 17px;
    border: 2px solid #888;
    background: #000;
    font-weight: bold;
    line-height: 13px;
}

/* Chart */
.chart {
    min-height: 584px;
}

.chart-tools {
    display: flex;
    align-items: center;
    padding: 5px 6px 0;
}

.tool-box {
    display: flex;
    gap: 1px;
    width: 272px;
    padding: 2px;
    margin-right: 4px;
    border: 1px solid #aaa;
    border-radius: 4px;
}

.chart-tools .btn,
.chart-tools .select {
    height: 26px;
}

.chart-pair {
    width: 91px;
}

.side {
    flex: 1;
    font-size: 13px;
}

.btn.side.selected {
    border-color: #2d6cc0;
    background: #3a7bd0;
    color: #fff;
}

.chart-span {
    width: 70px;
}

.icon-btn {
    width: 27px;
    color: #333;
}

.candle-btn,
.pen-btn {
    display: flex;
    align-items: center;
    gap: 12px;
    width: 49px;
    margin-right: 6px;
    padding: 0 6px;
}

.candle-btn svg {
    width: 14px;
    height: 15px;
    margin: 0;
}

.pen-btn {
    gap: 4px;
    width: 42px;
    padding: 0 5px;
    color: #222;
}

.pen-btn svg {
    margin: 0;
}

.btn-group {
    display: flex;
    width: 132px;
    margin-right: 6px;
}

.btn-group.pink {
    width: 80px;
}

.btn-group .btn {
    flex: 1;
}

.btn-group .btn + .btn {
    border-left: none;
    border-radius: 0;
}

.btn-group .btn:first-child {
    border-radius: 3px 0 0 3px;
}

.btn-group .btn:last-child {
    border-radius: 0 3px 3px 0;
}

.pink .btn {
    background: linear-gradient(#f8d8d8, #ffbcbc);
}

.chart-tools.second {
    justify-content: space-between;
}

.view-btn {
    width: 58px;
}

.view-btn i {
    margin-left: 3px;
}

.btn.target-btn {
    width: 28px;
    border-color: #f0c860;
    background: linear-gradient(#ffdf50, #ffb94a);
}

.fold-top {
    height: 10px;
    margin: 11px 3px 2px 6px;
    background: #4c4c4c;
}

.fold-top button,
.fold-left button {
    display: flex;
    align-items: center;
    justify-content: center;
    width: 21px;
    height: 9px;
    margin: 0 auto;
    border-radius: 1px;
    background: #f4f4f4;
}

.fold-top svg {
    width: 6px;
    height: 4px;
}

.chart-area {
    display: flex;
    margin: 0 1px 1px 7px;
}

.fold-left {
    display: flex;
    align-items: center;
    width: 10px;
    background: #4c4c4c;
}

.fold-left button {
    width: 10px;
    height: 20px;
}

.fold-left svg {
    width: 4px;
    height: 6px;
}

#chart {
    flex: 1;
    min-width: 0;
    font-family: Lato, "Noto Sans CJK JP", sans-serif;
    font-size: 13px;
}

#chart .plot {
    fill: #262626;
    stroke: #3a3a3a;
}

#chart .grid {
    stroke: #383838;
    stroke-dasharray: 4 4;
}

#chart .axis {
    fill: none;
    stroke: #888;
}

#chart .tick {
    stroke: #888;
}

#chart text {
    fill: #eee;
}

#chart .time {
    text-anchor: middle;
}

#chart .price {
    text-anchor: end;
}

#chart .price.now {
    fill: #4a3400;
}

#chart .red {
    fill: #f00;
    stroke: #e00000;
}

#chart .blue {
    fill: #0080f0;
    stroke: #0070d8;
}

#chart .body {
    stroke: none;
}

#chart .pos-line {
    fill: #8890c0;
}

#chart .pos-text {
    fill: #565e90;
    text-anchor: middle;
}

#chart .current {
    stroke: #d8a010;
    stroke-dasharray: 5 4;
}

#chart .over-line {
    fill: none;
    stroke: #ddd;
}

/* Sell / buy ratio */
.ratio {
    min-height: 532px;
}

.legend {
    display: flex;
    gap: 6px;
    padding: 6px 4px 4px;
    line-height: 14px;
}

.legend span::before {
    content: "";
    display: inline-block;
    width: 20px;
    height: 6px;
    margin-right: 3px;
    border-radius: 2px;
    background: var(--sell);
    vertical-align: 2px;
}

.legend .buy::before {
    background: var(--buy);
}

.tabs {
    display: flex;
    margin: 6px 11px 8px 4px;
}

.tabs button {
    flex: 1;
    height: 22px;
    border-radius: 3px;
    background: linear-gradient(#fff, #e2e2e2);
    color: #222;
}

.tabs .on {
    background: linear-gradient(#22992a, #14701a);
    color: #fff;
}

.ratio-row {
    display: flex;
    gap: 2px;
    height: 17px;
    margin: 0 12px 3px 7px;
    line-height: 15px;
}

.ratio-row .pair {
    width: 55px;
    background: #000;
    text-align: center;
    line-height: 17px;
}

.ratio-row .bar {
    display: flex;
    flex: 1;
    justify-content: space-between;
    height: 16px;
    background: var(--buy);
}

.ratio-row .sell {
    background: var(--sell);
}

/* Account */
.account {
    min-height: 261px;
}

.account-table {
    width: calc(100% - 20px);
    margin: 10px 10px 0;
    border: 2px solid var(--line);
}

.account-table th,
.account-table td {
    height: 25px;
    padding: 0 5px;
    border: 1px solid var(--line);
    white-space: nowrap;
}

.account-table th {
    background: #000;
    text-align: left;
}

.account-table td {
    background: #333;
    text-align: right;
}

.account-table .no-top {
    border-top-style: hidden;
}

.account-table .c1,
.account-table .c2 {
    width: 127px;
}

.account-table .c3 {
    width: 15px;
}

.account-table .c4 {
    width: 127px;
}

.acquired {
    padding: 4px 10px 0 0;
    font-size: 11px;
    text-align: right;
}

/* Order history */
.history {
    height: 256px;
}

.history-body {
    display: flex;
    height: 227px;
}

.history-main {
    flex: 1;
    min-width: 0;
    padding: 0 4px;
    overflow: hidden;
}

.history-filter {
    display: flex;
    align-items: center;
    height: 56px;
    padding-left: 2px;
}

.his-pair {
    width: 158px;
    margin-right: 7px;
}

.date-range {
    display: flex;
    align-items: center;
    margin-right: 6px;
}

.date {
    display: flex;
    width: 88px;
    height: 24px;
}

.date input {
    width: 65px;
    padding: 0 4px;
    border: none;
    border-radius: 3px 0 0 3px;
}

.date .btn {
    width: 23px;
    border-radius: 0 3px 3px 0;
}

.date svg {
    width: 14px;
    height: 15px;
}

.tilde {
    width: 17px;
    text-align: center;
}

.two-line {
    width: 31px;
    line-height: 18px;
}

.stack {
    display: grid;
    gap: 3px;
    margin-right: 7px;
}

.stack .strong {
    line-height: 24px;
    height: 24px;
}

.stack.cond {
    width: 112px;
}

.stack.state {
    width: 68px;
    margin-right: 8px;
}

.checks {
    display: grid;
    grid-template-columns: 49px 38px;
    gap: 8px 0;
}

.stack.count {
    width: 68px;
    margin-right: 11px;
}

.his-buttons {
    display: flex;
    align-items: center;
    gap: 4px;
}

.his-buttons .btn {
    width: 59px;
    height: 20px;
}

.his-buttons .his-csv {
    width: 74px;
    margin-right: 7px;
}

.history-table {
    width: 100%;
}

.history-table th {
    height: 38px;
}

.history-table th:nth-child(1) { width: 64px; }
.history-table th:nth-child(2) { width: 45px; }
.history-table th:nth-child(3) { width: 50px; }
.history-table th:nth-child(4) { width: 111px; }
.history-table th:nth-child(5) { width: 73px; }
.history-table th:nth-child(6) { width: 44px; }
.history-table th:nth-child(7) { width: 83px; }
.history-table th:nth-child(8) { width: 83px; }
.history-table th:nth-child(9) { width: 74px; }
.history-table th:nth-child(10) { width: 139px; }
.history-table th:nth-child(11) { width: 84px; }
.history-table th:nth-child(12) { width: 46px; }

.scrollbar {
    display: flex;
    flex-direction: column;
    align-items: center;
    width: 17px;
    background: #f1f1f1;
    color: #aaa;
    font-size: 7px;
    line-height: 17px;
}

.scrollbar .thumb {
    flex: 0 0 135px;
    width: 13px;
    background: #c1c1c1;
}

.scrollbar .dark {
    margin-top: auto;
    color: #444;
}
```
